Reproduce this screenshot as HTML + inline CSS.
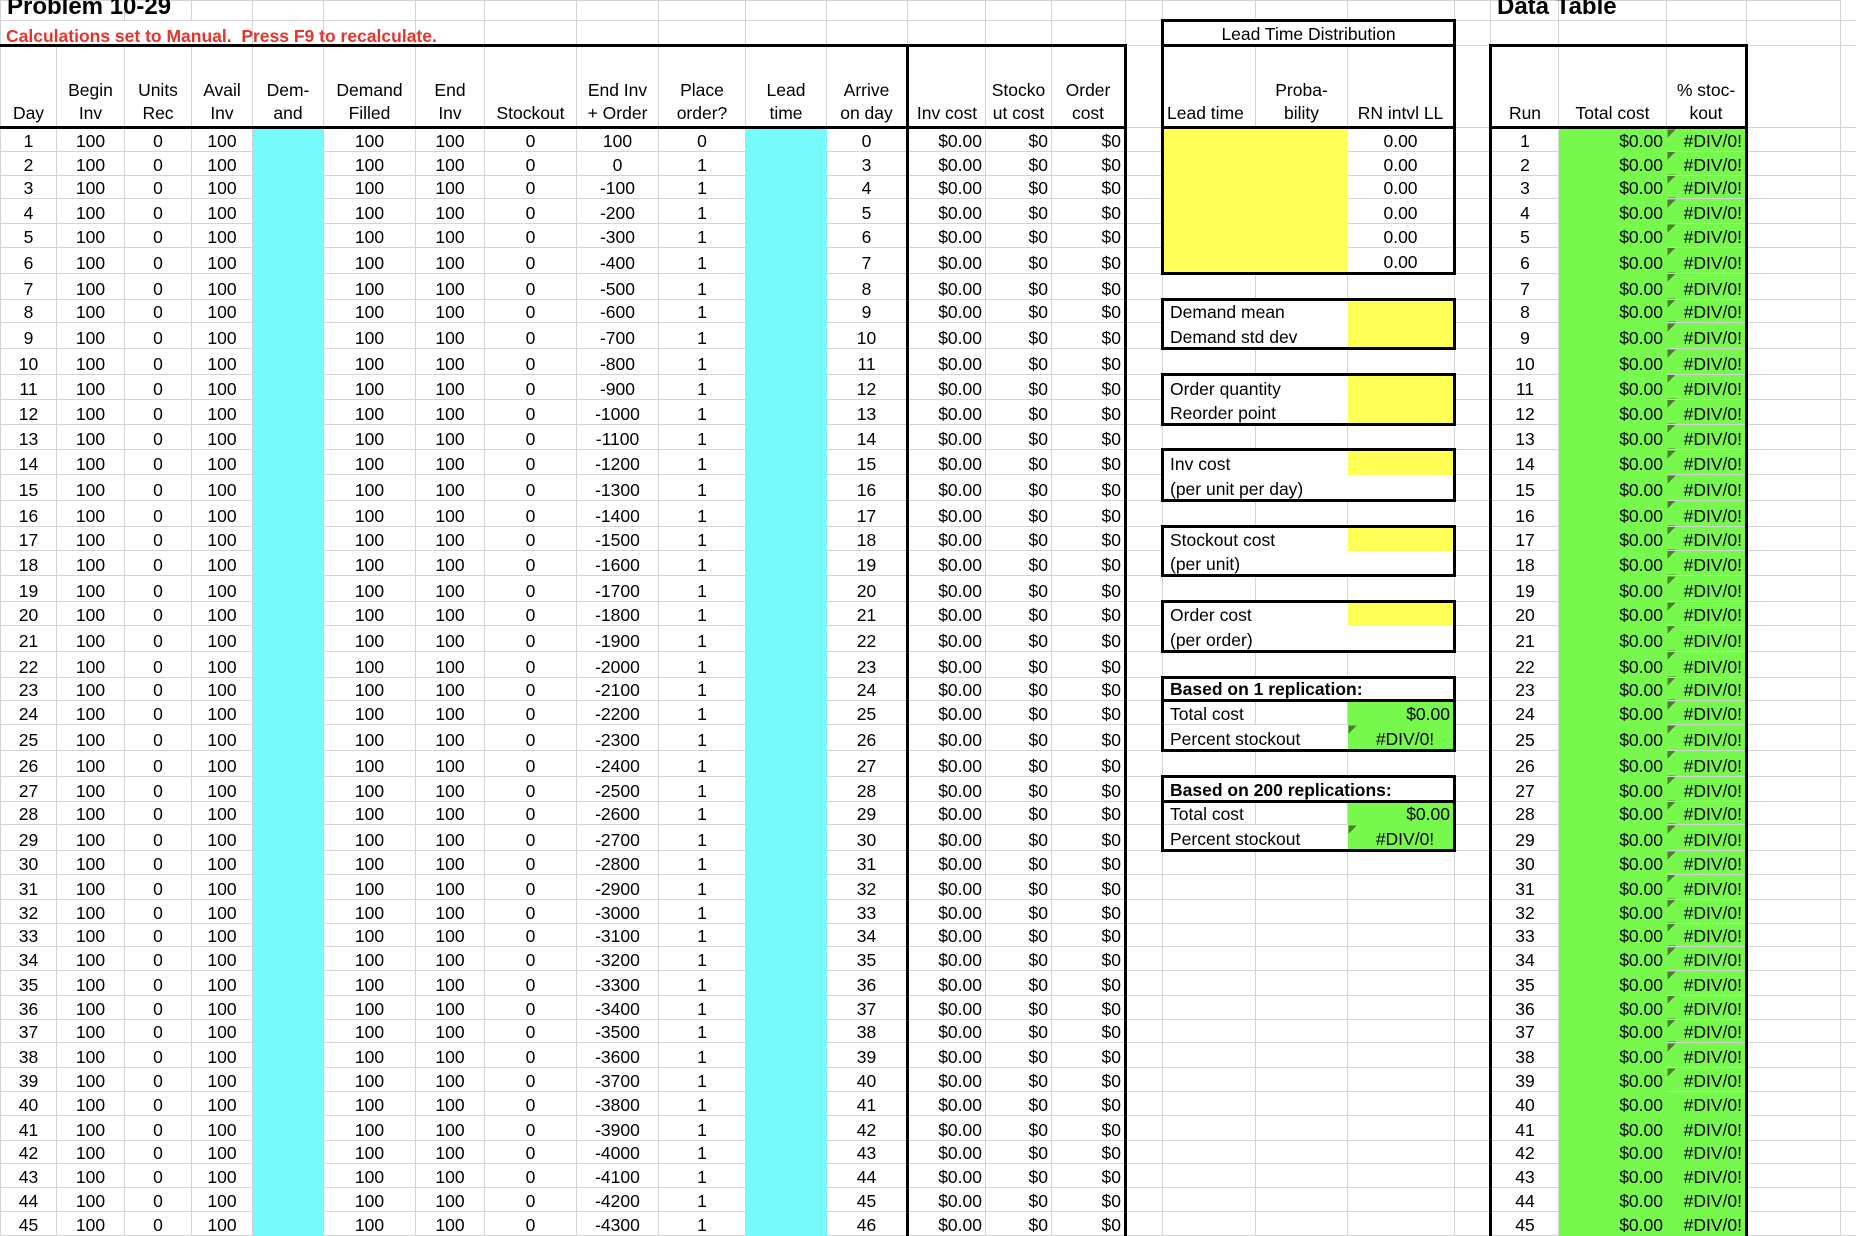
<!DOCTYPE html>
<html><head><meta charset="utf-8"><style>
html,body{margin:0;padding:0;background:#fff;width:1856px;height:1220px;overflow:hidden}
table{border-collapse:collapse;table-layout:fixed;width:1856px;font:17.5px "Liberation Sans",Arial,sans-serif;color:#000;position:absolute;left:0;top:0}
td{border:1px solid #d3d3d3;padding:0 3px;text-align:center;white-space:nowrap;overflow:hidden;line-height:18px;vertical-align:bottom;padding-bottom:1px;height:auto}
tr.a{height:23.8px}tr.b{height:24.8px}tr.c{height:25.8px}
.cy{background:#77fafb;border-color:#77fafb}
.g{background:#77f84c;border-color:#77f84c}
.y{background:#ffff55;border-color:#ffff55}
.R{text-align:right}.L{text-align:left;padding-left:6px}
.l{border-left:3px solid #000!important}.r{border-right:3px solid #000!important}
.t{border-top:3px solid #000!important}.bb{border-bottom:3px solid #000!important}
.w{border-color:#fff}
.tri{background:linear-gradient(135deg,#4b7d2f 0 6px,transparent 6px),#77f84c}
.bo{font-weight:bold}
tr.hd{height:82px}
.hd td{line-height:23px;vertical-align:bottom}
.ttl{position:absolute;left:7px;top:-7px;font:bold 24px "Liberation Sans",Arial,sans-serif}
.red{position:absolute;left:6px;top:26px;font:bold 17.5px "Liberation Sans",Arial,sans-serif;color:#e8332a}
.dt{position:absolute;left:1497px;top:-7px;font:bold 24px "Liberation Sans",Arial,sans-serif}
</style></head><body>
<table>
<colgroup><col style="width:56px"><col style="width:68px"><col style="width:67px"><col style="width:61px"><col style="width:71px"><col style="width:92px"><col style="width:69px"><col style="width:92px"><col style="width:82px"><col style="width:87px"><col style="width:81px"><col style="width:81px"><col style="width:78px"><col style="width:66px"><col style="width:74px"><col style="width:37px"><col style="width:93px"><col style="width:92px"><col style="width:107px"><col style="width:36px"><col style="width:68px"><col style="width:108px"><col style="width:80px"><col style="width:94px"><col style="width:16px"></colgroup>
<tr style="height:20px"><td colspan="2"></td><td></td><td></td><td></td><td></td><td></td><td></td><td></td><td></td><td></td><td></td><td></td><td></td><td></td><td></td><td></td><td></td><td></td><td></td><td></td><td></td><td></td><td></td></tr>
<tr style="height:25px"><td colspan="4"></td><td></td><td></td><td></td><td></td><td></td><td></td><td></td><td></td><td></td><td></td><td></td><td></td><td colspan="3" class="l r t bb">Lead Time Distribution</td><td></td><td></td><td></td><td></td><td></td><td></td></tr>
<tr class="hd"><td class="t bb">Day</td><td class="t bb">Begin<br>Inv</td><td class="t bb">Units<br>Rec</td><td class="t bb">Avail<br>Inv</td><td class="t bb">Dem-<br>and</td><td class="t bb">Demand<br>Filled</td><td class="t bb">End<br>Inv</td><td class="t bb">Stockout</td><td class="t bb">End Inv<br>+ Order</td><td class="t bb">Place<br>order?</td><td class="t bb">Lead<br>time</td><td class="t bb">Arrive<br>on day</td><td class="t bb l">Inv cost</td><td class="t bb">Stocko<br>ut cost</td><td class="t bb r">Order<br>cost</td><td></td><td class="l bb L" style="padding-left:3px">Lead time</td><td class="bb">Proba-<br>bility</td><td class="r bb">RN intvl LL</td><td></td><td class="l t bb">Run</td><td class="t bb">Total cost</td><td class="t bb r">% stoc-<br>kout</td><td></td><td></td></tr>
<tr class="a"><td>1</td><td>100</td><td>0</td><td>100</td><td class="cy"></td><td>100</td><td>100</td><td>0</td><td>100</td><td>0</td><td class="cy"></td><td>0</td><td class="l R">$0.00</td><td class="R">$0</td><td class="r R">$0</td><td></td><td class="y l"></td><td class="y"></td><td class="r">0.00</td><td></td><td class="l">1</td><td class="g R">$0.00</td><td class="tri R r">#DIV/0!</td><td></td><td></td></tr>
<tr class="a"><td>2</td><td>100</td><td>0</td><td>100</td><td class="cy"></td><td>100</td><td>100</td><td>0</td><td>0</td><td>1</td><td class="cy"></td><td>3</td><td class="l R">$0.00</td><td class="R">$0</td><td class="r R">$0</td><td></td><td class="y l"></td><td class="y"></td><td class="r">0.00</td><td></td><td class="l">2</td><td class="g R">$0.00</td><td class="tri R r">#DIV/0!</td><td></td><td></td></tr>
<tr class="a"><td>3</td><td>100</td><td>0</td><td>100</td><td class="cy"></td><td>100</td><td>100</td><td>0</td><td>-100</td><td>1</td><td class="cy"></td><td>4</td><td class="l R">$0.00</td><td class="R">$0</td><td class="r R">$0</td><td></td><td class="y l"></td><td class="y"></td><td class="r">0.00</td><td></td><td class="l">3</td><td class="g R">$0.00</td><td class="tri R r">#DIV/0!</td><td></td><td></td></tr>
<tr class="b"><td>4</td><td>100</td><td>0</td><td>100</td><td class="cy"></td><td>100</td><td>100</td><td>0</td><td>-200</td><td>1</td><td class="cy"></td><td>5</td><td class="l R">$0.00</td><td class="R">$0</td><td class="r R">$0</td><td></td><td class="y l"></td><td class="y"></td><td class="r">0.00</td><td></td><td class="l">4</td><td class="g R">$0.00</td><td class="tri R r">#DIV/0!</td><td></td><td></td></tr>
<tr class="a"><td>5</td><td>100</td><td>0</td><td>100</td><td class="cy"></td><td>100</td><td>100</td><td>0</td><td>-300</td><td>1</td><td class="cy"></td><td>6</td><td class="l R">$0.00</td><td class="R">$0</td><td class="r R">$0</td><td></td><td class="y l"></td><td class="y"></td><td class="r">0.00</td><td></td><td class="l">5</td><td class="g R">$0.00</td><td class="tri R r">#DIV/0!</td><td></td><td></td></tr>
<tr class="c"><td>6</td><td>100</td><td>0</td><td>100</td><td class="cy"></td><td>100</td><td>100</td><td>0</td><td>-400</td><td>1</td><td class="cy"></td><td>7</td><td class="l R">$0.00</td><td class="R">$0</td><td class="r R">$0</td><td></td><td class="y l bb"></td><td class="y bb"></td><td class="r bb">0.00</td><td></td><td class="l">6</td><td class="g R">$0.00</td><td class="tri R r">#DIV/0!</td><td></td><td></td></tr>
<tr class="c"><td>7</td><td>100</td><td>0</td><td>100</td><td class="cy"></td><td>100</td><td>100</td><td>0</td><td>-500</td><td>1</td><td class="cy"></td><td>8</td><td class="l R">$0.00</td><td class="R">$0</td><td class="r R">$0</td><td></td><td></td><td></td><td></td><td></td><td class="l">7</td><td class="g R">$0.00</td><td class="tri R r">#DIV/0!</td><td></td><td></td></tr>
<tr class="a"><td>8</td><td>100</td><td>0</td><td>100</td><td class="cy"></td><td>100</td><td>100</td><td>0</td><td>-600</td><td>1</td><td class="cy"></td><td>9</td><td class="l R">$0.00</td><td class="R">$0</td><td class="r R">$0</td><td></td><td colspan="2" class="l t L w">Demand mean</td><td class="y r t"></td><td></td><td class="l">8</td><td class="g R">$0.00</td><td class="tri R r">#DIV/0!</td><td></td><td></td></tr>
<tr class="c"><td>9</td><td>100</td><td>0</td><td>100</td><td class="cy"></td><td>100</td><td>100</td><td>0</td><td>-700</td><td>1</td><td class="cy"></td><td>10</td><td class="l R">$0.00</td><td class="R">$0</td><td class="r R">$0</td><td></td><td colspan="2" class="l bb L w">Demand std dev</td><td class="y r bb"></td><td></td><td class="l">9</td><td class="g R">$0.00</td><td class="tri R r">#DIV/0!</td><td></td><td></td></tr>
<tr class="c"><td>10</td><td>100</td><td>0</td><td>100</td><td class="cy"></td><td>100</td><td>100</td><td>0</td><td>-800</td><td>1</td><td class="cy"></td><td>11</td><td class="l R">$0.00</td><td class="R">$0</td><td class="r R">$0</td><td></td><td></td><td></td><td></td><td></td><td class="l">10</td><td class="g R">$0.00</td><td class="tri R r">#DIV/0!</td><td></td><td></td></tr>
<tr class="b"><td>11</td><td>100</td><td>0</td><td>100</td><td class="cy"></td><td>100</td><td>100</td><td>0</td><td>-900</td><td>1</td><td class="cy"></td><td>12</td><td class="l R">$0.00</td><td class="R">$0</td><td class="r R">$0</td><td></td><td colspan="2" class="l t L w">Order quantity</td><td class="y r t"></td><td></td><td class="l">11</td><td class="g R">$0.00</td><td class="tri R r">#DIV/0!</td><td></td><td></td></tr>
<tr class="b"><td>12</td><td>100</td><td>0</td><td>100</td><td class="cy"></td><td>100</td><td>100</td><td>0</td><td>-1000</td><td>1</td><td class="cy"></td><td>13</td><td class="l R">$0.00</td><td class="R">$0</td><td class="r R">$0</td><td></td><td colspan="2" class="l bb L w">Reorder point</td><td class="y r bb"></td><td></td><td class="l">12</td><td class="g R">$0.00</td><td class="tri R r">#DIV/0!</td><td></td><td></td></tr>
<tr class="c"><td>13</td><td>100</td><td>0</td><td>100</td><td class="cy"></td><td>100</td><td>100</td><td>0</td><td>-1100</td><td>1</td><td class="cy"></td><td>14</td><td class="l R">$0.00</td><td class="R">$0</td><td class="r R">$0</td><td></td><td></td><td></td><td></td><td></td><td class="l">13</td><td class="g R">$0.00</td><td class="tri R r">#DIV/0!</td><td></td><td></td></tr>
<tr class="b"><td>14</td><td>100</td><td>0</td><td>100</td><td class="cy"></td><td>100</td><td>100</td><td>0</td><td>-1200</td><td>1</td><td class="cy"></td><td>15</td><td class="l R">$0.00</td><td class="R">$0</td><td class="r R">$0</td><td></td><td colspan="2" class="l t L w">Inv cost</td><td class="y r t"></td><td></td><td class="l">14</td><td class="g R">$0.00</td><td class="tri R r">#DIV/0!</td><td></td><td></td></tr>
<tr class="c"><td>15</td><td>100</td><td>0</td><td>100</td><td class="cy"></td><td>100</td><td>100</td><td>0</td><td>-1300</td><td>1</td><td class="cy"></td><td>16</td><td class="l R">$0.00</td><td class="R">$0</td><td class="r R">$0</td><td></td><td colspan="2" class="l bb L w">(per unit per day)</td><td class="r bb w"></td><td></td><td class="l">15</td><td class="g R">$0.00</td><td class="tri R r">#DIV/0!</td><td></td><td></td></tr>
<tr class="c"><td>16</td><td>100</td><td>0</td><td>100</td><td class="cy"></td><td>100</td><td>100</td><td>0</td><td>-1400</td><td>1</td><td class="cy"></td><td>17</td><td class="l R">$0.00</td><td class="R">$0</td><td class="r R">$0</td><td></td><td></td><td></td><td></td><td></td><td class="l">16</td><td class="g R">$0.00</td><td class="tri R r">#DIV/0!</td><td></td><td></td></tr>
<tr class="a"><td>17</td><td>100</td><td>0</td><td>100</td><td class="cy"></td><td>100</td><td>100</td><td>0</td><td>-1500</td><td>1</td><td class="cy"></td><td>18</td><td class="l R">$0.00</td><td class="R">$0</td><td class="r R">$0</td><td></td><td colspan="2" class="l t L w">Stockout cost</td><td class="y r t"></td><td></td><td class="l">17</td><td class="g R">$0.00</td><td class="tri R r">#DIV/0!</td><td></td><td></td></tr>
<tr class="c"><td>18</td><td>100</td><td>0</td><td>100</td><td class="cy"></td><td>100</td><td>100</td><td>0</td><td>-1600</td><td>1</td><td class="cy"></td><td>19</td><td class="l R">$0.00</td><td class="R">$0</td><td class="r R">$0</td><td></td><td colspan="2" class="l bb L w">(per unit)</td><td class="r bb w"></td><td></td><td class="l">18</td><td class="g R">$0.00</td><td class="tri R r">#DIV/0!</td><td></td><td></td></tr>
<tr class="c"><td>19</td><td>100</td><td>0</td><td>100</td><td class="cy"></td><td>100</td><td>100</td><td>0</td><td>-1700</td><td>1</td><td class="cy"></td><td>20</td><td class="l R">$0.00</td><td class="R">$0</td><td class="r R">$0</td><td></td><td></td><td></td><td></td><td></td><td class="l">19</td><td class="g R">$0.00</td><td class="tri R r">#DIV/0!</td><td></td><td></td></tr>
<tr class="a"><td>20</td><td>100</td><td>0</td><td>100</td><td class="cy"></td><td>100</td><td>100</td><td>0</td><td>-1800</td><td>1</td><td class="cy"></td><td>21</td><td class="l R">$0.00</td><td class="R">$0</td><td class="r R">$0</td><td></td><td colspan="2" class="l t L w">Order cost</td><td class="y r t"></td><td></td><td class="l">20</td><td class="g R">$0.00</td><td class="tri R r">#DIV/0!</td><td></td><td></td></tr>
<tr class="c"><td>21</td><td>100</td><td>0</td><td>100</td><td class="cy"></td><td>100</td><td>100</td><td>0</td><td>-1900</td><td>1</td><td class="cy"></td><td>22</td><td class="l R">$0.00</td><td class="R">$0</td><td class="r R">$0</td><td></td><td colspan="2" class="l bb L w">(per order)</td><td class="r bb w"></td><td></td><td class="l">21</td><td class="g R">$0.00</td><td class="tri R r">#DIV/0!</td><td></td><td></td></tr>
<tr class="c"><td>22</td><td>100</td><td>0</td><td>100</td><td class="cy"></td><td>100</td><td>100</td><td>0</td><td>-2000</td><td>1</td><td class="cy"></td><td>23</td><td class="l R">$0.00</td><td class="R">$0</td><td class="r R">$0</td><td></td><td></td><td></td><td></td><td></td><td class="l">22</td><td class="g R">$0.00</td><td class="tri R r">#DIV/0!</td><td></td><td></td></tr>
<tr class="a"><td>23</td><td>100</td><td>0</td><td>100</td><td class="cy"></td><td>100</td><td>100</td><td>0</td><td>-2100</td><td>1</td><td class="cy"></td><td>24</td><td class="l R">$0.00</td><td class="R">$0</td><td class="r R">$0</td><td></td><td colspan="3" class="l r t bb L bo">Based on 1 replication:</td><td></td><td class="l">23</td><td class="g R">$0.00</td><td class="tri R r">#DIV/0!</td><td></td><td></td></tr>
<tr class="a"><td>24</td><td>100</td><td>0</td><td>100</td><td class="cy"></td><td>100</td><td>100</td><td>0</td><td>-2200</td><td>1</td><td class="cy"></td><td>25</td><td class="l R">$0.00</td><td class="R">$0</td><td class="r R">$0</td><td></td><td class="l L">Total cost</td><td></td><td class="g r R">$0.00</td><td></td><td class="l">24</td><td class="g R">$0.00</td><td class="tri R r">#DIV/0!</td><td></td><td></td></tr>
<tr class="c"><td>25</td><td>100</td><td>0</td><td>100</td><td class="cy"></td><td>100</td><td>100</td><td>0</td><td>-2300</td><td>1</td><td class="cy"></td><td>26</td><td class="l R">$0.00</td><td class="R">$0</td><td class="r R">$0</td><td></td><td colspan="2" class="l bb L w">Percent stockout</td><td class="tri r bb" style="padding-left:12px">#DIV/0!</td><td></td><td class="l">25</td><td class="g R">$0.00</td><td class="tri R r">#DIV/0!</td><td></td><td></td></tr>
<tr class="c"><td>26</td><td>100</td><td>0</td><td>100</td><td class="cy"></td><td>100</td><td>100</td><td>0</td><td>-2400</td><td>1</td><td class="cy"></td><td>27</td><td class="l R">$0.00</td><td class="R">$0</td><td class="r R">$0</td><td></td><td></td><td></td><td></td><td></td><td class="l">26</td><td class="g R">$0.00</td><td class="tri R r">#DIV/0!</td><td></td><td></td></tr>
<tr class="b"><td>27</td><td>100</td><td>0</td><td>100</td><td class="cy"></td><td>100</td><td>100</td><td>0</td><td>-2500</td><td>1</td><td class="cy"></td><td>28</td><td class="l R">$0.00</td><td class="R">$0</td><td class="r R">$0</td><td></td><td colspan="3" class="l r t bb L bo">Based on 200 replications:</td><td></td><td class="l">27</td><td class="g R">$0.00</td><td class="tri R r">#DIV/0!</td><td></td><td></td></tr>
<tr class="a"><td>28</td><td>100</td><td>0</td><td>100</td><td class="cy"></td><td>100</td><td>100</td><td>0</td><td>-2600</td><td>1</td><td class="cy"></td><td>29</td><td class="l R">$0.00</td><td class="R">$0</td><td class="r R">$0</td><td></td><td class="l L">Total cost</td><td></td><td class="g r R">$0.00</td><td></td><td class="l">28</td><td class="g R">$0.00</td><td class="tri R r">#DIV/0!</td><td></td><td></td></tr>
<tr class="c"><td>29</td><td>100</td><td>0</td><td>100</td><td class="cy"></td><td>100</td><td>100</td><td>0</td><td>-2700</td><td>1</td><td class="cy"></td><td>30</td><td class="l R">$0.00</td><td class="R">$0</td><td class="r R">$0</td><td></td><td colspan="2" class="l bb L w">Percent stockout</td><td class="tri r bb" style="padding-left:12px">#DIV/0!</td><td></td><td class="l">29</td><td class="g R">$0.00</td><td class="tri R r">#DIV/0!</td><td></td><td></td></tr>
<tr class="a"><td>30</td><td>100</td><td>0</td><td>100</td><td class="cy"></td><td>100</td><td>100</td><td>0</td><td>-2800</td><td>1</td><td class="cy"></td><td>31</td><td class="l R">$0.00</td><td class="R">$0</td><td class="r R">$0</td><td></td><td></td><td></td><td></td><td></td><td class="l">30</td><td class="g R">$0.00</td><td class="tri R r">#DIV/0!</td><td></td><td></td></tr>
<tr class="b"><td>31</td><td>100</td><td>0</td><td>100</td><td class="cy"></td><td>100</td><td>100</td><td>0</td><td>-2900</td><td>1</td><td class="cy"></td><td>32</td><td class="l R">$0.00</td><td class="R">$0</td><td class="r R">$0</td><td></td><td></td><td></td><td></td><td></td><td class="l">31</td><td class="g R">$0.00</td><td class="tri R r">#DIV/0!</td><td></td><td></td></tr>
<tr class="a"><td>32</td><td>100</td><td>0</td><td>100</td><td class="cy"></td><td>100</td><td>100</td><td>0</td><td>-3000</td><td>1</td><td class="cy"></td><td>33</td><td class="l R">$0.00</td><td class="R">$0</td><td class="r R">$0</td><td></td><td></td><td></td><td></td><td></td><td class="l">32</td><td class="g R">$0.00</td><td class="tri R r">#DIV/0!</td><td></td><td></td></tr>
<tr class="a"><td>33</td><td>100</td><td>0</td><td>100</td><td class="cy"></td><td>100</td><td>100</td><td>0</td><td>-3100</td><td>1</td><td class="cy"></td><td>34</td><td class="l R">$0.00</td><td class="R">$0</td><td class="r R">$0</td><td></td><td></td><td></td><td></td><td></td><td class="l">33</td><td class="g R">$0.00</td><td class="tri R r">#DIV/0!</td><td></td><td></td></tr>
<tr class="a"><td>34</td><td>100</td><td>0</td><td>100</td><td class="cy"></td><td>100</td><td>100</td><td>0</td><td>-3200</td><td>1</td><td class="cy"></td><td>35</td><td class="l R">$0.00</td><td class="R">$0</td><td class="r R">$0</td><td></td><td></td><td></td><td></td><td></td><td class="l">34</td><td class="g R">$0.00</td><td class="tri R r">#DIV/0!</td><td></td><td></td></tr>
<tr class="b"><td>35</td><td>100</td><td>0</td><td>100</td><td class="cy"></td><td>100</td><td>100</td><td>0</td><td>-3300</td><td>1</td><td class="cy"></td><td>36</td><td class="l R">$0.00</td><td class="R">$0</td><td class="r R">$0</td><td></td><td></td><td></td><td></td><td></td><td class="l">35</td><td class="g R">$0.00</td><td class="tri R r">#DIV/0!</td><td></td><td></td></tr>
<tr class="a"><td>36</td><td>100</td><td>0</td><td>100</td><td class="cy"></td><td>100</td><td>100</td><td>0</td><td>-3400</td><td>1</td><td class="cy"></td><td>37</td><td class="l R">$0.00</td><td class="R">$0</td><td class="r R">$0</td><td></td><td></td><td></td><td></td><td></td><td class="l">36</td><td class="g R">$0.00</td><td class="tri R r">#DIV/0!</td><td></td><td></td></tr>
<tr class="a"><td>37</td><td>100</td><td>0</td><td>100</td><td class="cy"></td><td>100</td><td>100</td><td>0</td><td>-3500</td><td>1</td><td class="cy"></td><td>38</td><td class="l R">$0.00</td><td class="R">$0</td><td class="r R">$0</td><td></td><td></td><td></td><td></td><td></td><td class="l">37</td><td class="g R">$0.00</td><td class="tri R r">#DIV/0!</td><td></td><td></td></tr>
<tr class="b"><td>38</td><td>100</td><td>0</td><td>100</td><td class="cy"></td><td>100</td><td>100</td><td>0</td><td>-3600</td><td>1</td><td class="cy"></td><td>39</td><td class="l R">$0.00</td><td class="R">$0</td><td class="r R">$0</td><td></td><td></td><td></td><td></td><td></td><td class="l">38</td><td class="g R">$0.00</td><td class="tri R r">#DIV/0!</td><td></td><td></td></tr>
<tr class="a"><td>39</td><td>100</td><td>0</td><td>100</td><td class="cy"></td><td>100</td><td>100</td><td>0</td><td>-3700</td><td>1</td><td class="cy"></td><td>40</td><td class="l R">$0.00</td><td class="R">$0</td><td class="r R">$0</td><td></td><td></td><td></td><td></td><td></td><td class="l">39</td><td class="g R">$0.00</td><td class="tri R r">#DIV/0!</td><td></td><td></td></tr>
<tr class="a"><td>40</td><td>100</td><td>0</td><td>100</td><td class="cy"></td><td>100</td><td>100</td><td>0</td><td>-3800</td><td>1</td><td class="cy"></td><td>41</td><td class="l R">$0.00</td><td class="R">$0</td><td class="r R">$0</td><td></td><td></td><td></td><td></td><td></td><td class="l">40</td><td class="g R">$0.00</td><td class="g R r">#DIV/0!</td><td></td><td></td></tr>
<tr class="b"><td>41</td><td>100</td><td>0</td><td>100</td><td class="cy"></td><td>100</td><td>100</td><td>0</td><td>-3900</td><td>1</td><td class="cy"></td><td>42</td><td class="l R">$0.00</td><td class="R">$0</td><td class="r R">$0</td><td></td><td></td><td></td><td></td><td></td><td class="l">41</td><td class="g R">$0.00</td><td class="g R r">#DIV/0!</td><td></td><td></td></tr>
<tr class="a"><td>42</td><td>100</td><td>0</td><td>100</td><td class="cy"></td><td>100</td><td>100</td><td>0</td><td>-4000</td><td>1</td><td class="cy"></td><td>43</td><td class="l R">$0.00</td><td class="R">$0</td><td class="r R">$0</td><td></td><td></td><td></td><td></td><td></td><td class="l">42</td><td class="g R">$0.00</td><td class="g R r">#DIV/0!</td><td></td><td></td></tr>
<tr class="a"><td>43</td><td>100</td><td>0</td><td>100</td><td class="cy"></td><td>100</td><td>100</td><td>0</td><td>-4100</td><td>1</td><td class="cy"></td><td>44</td><td class="l R">$0.00</td><td class="R">$0</td><td class="r R">$0</td><td></td><td></td><td></td><td></td><td></td><td class="l">43</td><td class="g R">$0.00</td><td class="g R r">#DIV/0!</td><td></td><td></td></tr>
<tr class="a"><td>44</td><td>100</td><td>0</td><td>100</td><td class="cy"></td><td>100</td><td>100</td><td>0</td><td>-4200</td><td>1</td><td class="cy"></td><td>45</td><td class="l R">$0.00</td><td class="R">$0</td><td class="r R">$0</td><td></td><td></td><td></td><td></td><td></td><td class="l">44</td><td class="g R">$0.00</td><td class="g R r">#DIV/0!</td><td></td><td></td></tr>
<tr class="a"><td>45</td><td>100</td><td>0</td><td>100</td><td class="cy"></td><td>100</td><td>100</td><td>0</td><td>-4300</td><td>1</td><td class="cy"></td><td>46</td><td class="l R">$0.00</td><td class="R">$0</td><td class="r R">$0</td><td></td><td></td><td></td><td></td><td></td><td class="l">45</td><td class="g R">$0.00</td><td class="g R r">#DIV/0!</td><td></td><td></td></tr>
</table>
<div class="ttl">Problem 10-29</div>
<div class="red">Calculations set to Manual.&nbsp; Press F9 to recalculate.</div>
<div class="dt">Data Table</div>
</body></html>
